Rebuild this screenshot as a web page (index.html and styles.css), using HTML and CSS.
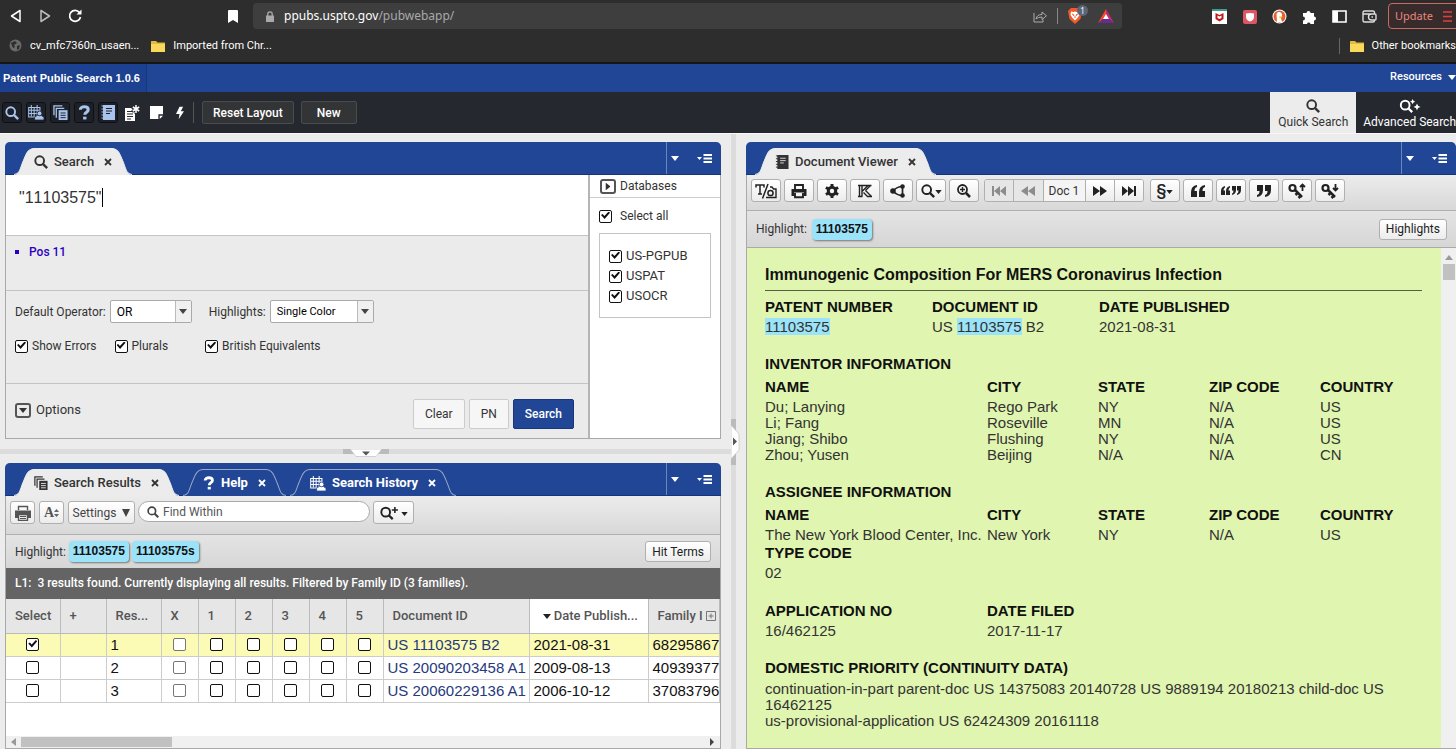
FILE: index.html
```html
<!DOCTYPE html>
<html lang="en">
<head>
    <meta charset="UTF-8">
    <meta name="viewport" content="width=device-width, initial-scale=1.0">
    <title>Patent Public Search</title>
    <link rel="stylesheet" href="styles.css">
</head>
<body>
    <!-- shared icons -->
    <svg class="sprite" aria-hidden="true">
        <symbol id="i-search" viewBox="0 0 16 16"><circle cx="6.5" cy="6.5" r="5" fill="none" stroke="currentColor" stroke-width="2.2"/><path d="M10 10l5 5" stroke="currentColor" stroke-width="2.8"/></symbol>
        <symbol id="i-searchplus" viewBox="0 0 24 16"><circle cx="6.5" cy="7" r="5" fill="none" stroke="currentColor" stroke-width="2.2"/><path d="M10 10.5l4.500 4.500" stroke="currentColor" stroke-width="2.600"/><path d="M17 1v7M13.500 4.500h7" stroke="currentColor" stroke-width="1.800"/></symbol>
        <symbol id="i-searchstars" viewBox="0 0 24 16"><circle cx="6.5" cy="7" r="5" fill="none" stroke="currentColor" stroke-width="2.200"/><path d="M10 10.500l4.500 4.500" stroke="currentColor" stroke-width="2.600"/><path d="M15 0l1 2 2 1-2 1-1 2-1-2-2-1 2-1zM20 5l1.200 2.800L24 9l-2.800 1.200L20 13l-1.200-2.800L16 9l2.800-1.200z" fill="currentColor"/></symbol>
        <symbol id="i-pages" viewBox="0 0 16 16"><path d="M1 11V1h9M3.500 13.500V3.500H12" fill="none" stroke="currentColor" stroke-width="1.400"/><path d="M6 5.500h9.500V16H6z" fill="currentColor"/><path d="M8 8.500h5.500M8 11h5.500M8 13.500h5.500" stroke="var(--line, #eee)"/></symbol>
        <symbol id="i-calendar" viewBox="0 0 17 16"><path d="M.7 2.700h12v10H.7zM.7 5.500h12M3.500 0v12M6.500 3v9M9.700 0v12M.7 9h12" fill="none" stroke="currentColor" stroke-width="1.100"/><path d="M7 16v-3l3-2h4l3 2v3z" fill="currentColor" stroke="var(--line, #204695)" stroke-width=".8"/><circle cx="12.300" cy="9" r="2.500" fill="currentColor" stroke="var(--line, #204695)" stroke-width=".8"/></symbol>
        <symbol id="i-help" viewBox="0 0 14 16"><path d="M2.500 5C2.500 0.800 11 0.800 11 5c0 2.600-3.700 2.700-3.700 5.500" fill="none" stroke="currentColor" stroke-width="3.300"/><path d="M5.500 12.500h3.600v3H5.500z" fill="currentColor"/></symbol>
        <symbol id="i-book" viewBox="0 0 14 15"><path d="M2 0h12v15H2z" fill="currentColor"/><path d="M5 3.500h6M5 6h6M5 8.500h4" stroke="var(--line, #ddd)"/><path d="M.5 1h3M.5 4h3M.5 7h3M.5 10h3M.5 13h3" stroke="currentColor"/></symbol>
        <symbol id="i-note" viewBox="0 0 16 16"><path d="M1 3h10v13H1z" fill="currentColor"/><path d="M3 6.500h5M3 9h6M3 11.500h6M3 14h4" stroke="#262830"/><path d="M12 0v9M8 2.500l8 4M16 2.500l-8 4" stroke="#262830" stroke-width="3"/><path d="M12 0v8M8.800 2l6.400 4M15.200 2L8.800 6" stroke="currentColor" stroke-width="1.500"/></symbol>
        <symbol id="i-sticky" viewBox="0 0 14 14"><path d="M0 0h14v9H9v5H0z" fill="currentColor"/><path d="M10.500 10.500H14L10.500 14z" fill="currentColor"/></symbol>
        <symbol id="i-bolt" viewBox="0 0 9 14"><path d="M4 0h4L5.500 5H9L3 14l1-6H0z" fill="currentColor"/></symbol>
        <symbol id="i-x" viewBox="0 0 8 8"><path d="M1 1l6 6M7 1L1 7" stroke="currentColor" stroke-width="1.800"/></symbol>
        <symbol id="i-down" viewBox="0 0 8 5"><path d="M0 0h8L4 5z" fill="currentColor"/></symbol>
        <symbol id="i-menu" viewBox="0 0 15 9"><path d="M0 3h5L2.500 6z" fill="currentColor"/><path d="M6.500 1H15M6.500 4.500H15M6.500 8H15" stroke="currentColor" stroke-width="1.800"/></symbol>
        <symbol id="i-folder" viewBox="0 0 14 12"><path d="M0 1.500Q0 1 .5 1H5l1.500 1.500h7q.5 0 .5.500v8.500q0 .5-.5.500H.5Q0 12 0 11.500z" fill="#e3b93f"/><path d="M0 4h14v7.500q0 .5-.5.500H.5Q0 12 0 11.500z" fill="#f8d95c"/></symbol>
        <symbol id="i-printer" viewBox="0 0 16 16"><path d="M4 6V2h8v4M4 10v4.200h8V10" fill="none" stroke="currentColor" stroke-width="1.900"/><path d="M.5 6h15v7H13V9.500H3V13H.5z" fill="currentColor"/></symbol>
        <symbol id="i-printer-page" viewBox="0 0 16 16"><path d="M3.500 5V1.500h9V5" fill="none" stroke="currentColor" stroke-width="1.400"/><path d="M0 5.500h16V13H0z" fill="currentColor"/><path d="M3.500 9.500h9v6h-9z" fill="#eee" stroke="currentColor" stroke-width="1.400"/><path d="M5 11.500h6M5 13.500h6" stroke="currentColor"/></symbol>
        <symbol id="tab-edge" viewBox="0 0 20 26" preserveAspectRatio="none"><path d="M0 26C6 25 6 20 9 13S14 .5 20 .5V26z" fill="var(--tab-fill)"/><path d="M0 25.500C6 25 6 20 9 13S14 .5 20 .5" fill="none" stroke="var(--tab-line)"/></symbol>
        <symbol id="i-key" viewBox="0 0 18 16"><circle cx="4.500" cy="5" r="3" fill="none" stroke="currentColor" stroke-width="2.200"/><path d="M7 7l7 7M10 9.500l-2.500 2.500M13 12.500l-2.500 2.500" stroke="currentColor" stroke-width="2.500"/></symbol>
    </svg>

    <div class="browser">
        <div class="browser-bar">
            <div class="nav-buttons">
                <button class="plain" aria-label="Back"><svg width="12" height="14" viewBox="0 0 12 14"><path d="M10 1.500v11L1.500 7z" fill="none" stroke="#fff" stroke-width="1.500" stroke-linejoin="round"/></svg></button>
                <button class="plain" aria-label="Forward"><svg width="12" height="14" viewBox="0 0 12 14"><path d="M2 1.500v11L10.500 7z" fill="none" stroke="#bbb" stroke-width="1.500" stroke-linejoin="round"/></svg></button>
                <button class="plain" aria-label="Reload"><svg width="14" height="14" viewBox="0 0 14 14"><path d="M11.500 3.500A5.500 5.500 0 1 0 12.500 8" fill="none" stroke="#fff" stroke-width="1.700"/><path d="M8.500 5.500h5v-5z" fill="#fff"/></svg></button>
            </div>
            <button class="plain bookmark" aria-label="Bookmark"><svg width="10" height="13" viewBox="0 0 10 13"><path d="M1 0h8q1 0 1 1v12L5 10l-5 3V1q0-1 1-1z" fill="#fff"/></svg></button>
            <div class="address">
                <svg width="8" height="11" viewBox="0 0 8 11"><path d="M0 4.500h8V11H0z" fill="#a9a9ac"/><path d="M1.800 5V3a2.200 2.200 0 0 1 4.400 0v2" fill="none" stroke="#a9a9ac" stroke-width="1.300"/></svg>
                <span class="url">ppubs.uspto.gov<span>/pubwebapp/</span></span>
                <svg class="share" width="14" height="13" viewBox="0 0 14 13"><path d="M1 3v9h9V9.500" fill="none" stroke="#aaa"/><path d="M3 9c.5-3 2.500-4.500 6-4.500V2l4.500 3.800L9 9.500V7Q5 7 3 9z" fill="none" stroke="#aaa"/></svg>
                <span class="bar-line"></span>
                <span class="shield">
                    <svg width="14" height="16" viewBox="0 0 14 16"><path d="M3 0h8l3 3-1.500 8L7 16l-5.500-5L0 3z" fill="#f05a2b"/><path d="M3 3.500l2.500.5L7 3.500 8.500 4l2.500-.5L11.500 7l-2 3L7 12.500 4.500 10l-2-3z" fill="#fff"/><path d="M4 6l2 1-.5 1M10 6L8 7l.5 1M7 8v2" stroke="#f05a2b" fill="none"/></svg>
                    <span class="shield-count">1</span>
                </span>
                <svg class="bat" width="16" height="14" viewBox="0 0 16 14"><path d="M8 0v5.500L5.500 9.500 0 14z" fill="#ff4724"/><path d="M0 14l5-4h6l5 4z" fill="#6a2b8f"/><path d="M8 0l8 14-5-4L8 5z" fill="#c72777"/><path d="M8 5l3 5H5z" fill="#fff"/></svg>
            </div>
            <div class="extensions">
                <svg width="15" height="15" viewBox="0 0 15 15"><path d="M0 0h15v15H0z" fill="#fff"/><path d="M0 0h15v2H0z" fill="#3aa08d"/><path d="M3.500 4L7.500 6l4-2v6l-4 2.500-4-2.500z" fill="#c01818"/><path d="M5.500 6.500l2 1 2-1V9l-2 1-2-1z" fill="#fff"/></svg>
                <svg width="15" height="15" viewBox="0 0 15 15"><rect x="1" y="1" width="14" height="14" rx="2" fill="#de5664"/><path d="M4 4.500l4-.5 4 .5V8q0 3-4 4.500Q4 11 4 8z" fill="#fff"/></svg>
                <svg width="15" height="15" viewBox="0 0 15 15"><circle cx="7.500" cy="7.500" r="7" fill="#fff"/><circle cx="7.500" cy="7.500" r="6" fill="#e0632f"/><path d="M5 13L4.500 5Q5 2.500 7.500 3q3 .5 2.500 4L9 9l1 4z" fill="#fff"/><path d="M7 7.500h4l-3 2z" fill="#f8c330"/></svg>
                <svg width="15" height="15" viewBox="0 0 15 15"><path d="M1 4h3.500a2 2 0 1 1 4 0H12v3.500a2 2 0 1 1 0 4V15H8.500a1.800 1.800 0 0 0-3.500 0H1v-3.500a2 2 0 0 0 0-4z" fill="#fff"/></svg>
                <svg width="15" height="13" viewBox="0 0 15 13"><path d="M1 1h13v11H1z" fill="none" stroke="#fff" stroke-width="1.600"/><path d="M1 1h5v11H1z" fill="#fff"/></svg>
                <svg width="15" height="13" viewBox="0 0 15 13"><path d="M12.500 4V2.500q0-1.500-1.500-1.500H2.500Q1 1 1 2.500v8Q1 12 2.500 12H11q1.500 0 1.500-1.500V10M1.500 4H13q1 0 1 1v4q0 1-1 1H9.500a3 3 0 0 1 0-6M9.500 7H11" fill="none" stroke="#ddd" stroke-width="1.400"/></svg>
            </div>
            <button class="update">Update <svg width="10" height="11" viewBox="0 0 10 11"><path d="M0 1h9M0 5.500h9M0 10h9" stroke="#e0403c" stroke-width="1.300"/></svg></button>
        </div>
        <div class="bookmarks">
            <a href="#"><svg width="13" height="13" viewBox="0 0 13 13"><circle cx="6.500" cy="6.500" r="6" fill="#6a6a6a"/><path d="M2 4l4-2 2 2-3 2 1 2-2 1zM8 7l3-1-1 4-2 1z" fill="#2d2d2d"/></svg>cv_mfc7360n_usaen...</a>
            <a href="#"><svg width="14" height="12"><use href="#i-folder"/></svg>Imported from Chr...</a>
            <a href="#" class="other"><svg width="14" height="12"><use href="#i-folder"/></svg>Other bookmarks</a>
        </div>
    </div>

    <header class="app-header">
        <h1>Patent Public Search 1.0.6</h1>
        <button class="plain resources">Resources <svg width="8" height="5"><use href="#i-down"/></svg></button>
    </header>

    <nav class="app-toolbar">
        <div class="tool-icons">
            <button class="tool on" aria-label="Search"><svg width="14" height="14"><use href="#i-search"/></svg></button>
            <button class="tool on" aria-label="Search History"><svg width="16" height="15"><use href="#i-calendar"/></svg></button>
            <button class="tool on" aria-label="Search Results"><svg width="15" height="15"><use href="#i-pages"/></svg></button>
            <button class="tool on" aria-label="Help"><svg width="13" height="15"><use href="#i-help"/></svg></button>
            <button class="tool on" aria-label="Document Viewer"><svg width="14" height="15"><use href="#i-book"/></svg></button>
            <button class="tool" aria-label="Notes"><svg width="16" height="16"><use href="#i-note"/></svg></button>
            <button class="tool" aria-label="Sticky note"><svg width="13" height="13"><use href="#i-sticky"/></svg></button>
            <button class="tool" aria-label="Quick action"><svg width="8" height="14"><use href="#i-bolt"/></svg></button>
        </div>
        <button class="dark-button">Reset Layout</button>
        <button class="dark-button">New</button>
        <div class="modes">
            <a href="#" class="mode active"><svg width="14" height="14"><use href="#i-search"/></svg>Quick Search</a>
            <a href="#" class="mode"><svg width="24" height="14"><use href="#i-searchstars"/></svg>Advanced Search</a>
        </div>
    </nav>

    <main class="workspace">
        <div class="left-column">
            <section class="pane">
                <div class="pane-header">
                    <div class="tab active">
                        <svg class="edge"><use href="#tab-edge"/></svg>
                        <div class="tab-body"><svg width="14" height="14"><use href="#i-search"/></svg><span>Search</span><button class="plain" aria-label="Close Search"><svg width="8" height="8"><use href="#i-x"/></svg></button></div>
                        <svg class="edge right"><use href="#tab-edge"/></svg>
                    </div>
                    <div class="pane-menu"><button class="plain" aria-label="Tabs"><svg width="8" height="5"><use href="#i-down"/></svg></button><button class="plain" aria-label="Pane menu"><svg width="15" height="9"><use href="#i-menu"/></svg></button></div>
                </div>
                <div class="search-body">
                    <form class="search-form" onsubmit="return false">
                        <div class="query">
                            <textarea aria-label="Query" spellcheck="false">"11103575"</textarea>
                            <span class="caret"></span>
                        </div>
                        <ul class="messages"><li>Pos 11</li></ul>
                        <div class="settings">
                            <div class="setting-row">
                                <label for="operator">Default Operator:</label>
                                <span class="select operator"><select id="operator"><option>OR</option><option>AND</option></select><i><svg width="8" height="5"><use href="#i-down"/></svg></i></span>
                                <label for="colors">Highlights:</label>
                                <span class="select colors"><select id="colors"><option>Single Color</option><option>Multi-color</option></select><i><svg width="8" height="5"><use href="#i-down"/></svg></i></span>
                            </div>
                            <div class="setting-row checks">
                                <label><input type="checkbox" checked>Show Errors</label>
                                <label><input type="checkbox" checked>Plurals</label>
                                <label><input type="checkbox" checked>British Equivalents</label>
                            </div>
                        </div>
                        <div class="actions">
                            <button class="plain options"><span class="box-arrow"><svg width="8" height="5"><use href="#i-down"/></svg></span>Options</button>
                            <div class="action-buttons">
                                <button class="flat">Clear</button>
                                <button class="flat">PN</button>
                                <button class="flat primary">Search</button>
                            </div>
                        </div>
                    </form>
                    <aside class="databases">
                        <button class="plain db-title"><span class="box-arrow side"><svg width="8" height="5"><use href="#i-down"/></svg></span>Databases</button>
                        <label class="select-all"><input type="checkbox" checked>Select all</label>
                        <div class="db-list">
                            <label><input type="checkbox" checked>US-PGPUB</label>
                            <label><input type="checkbox" checked>USPAT</label>
                            <label><input type="checkbox" checked>USOCR</label>
                        </div>
                    </aside>
                </div>
            </section>

            <div class="h-splitter">
                <svg width="46" height="8" viewBox="0 0 46 8"><path d="M0 0h46v5H0z" fill="#bbb"/><path d="M7 0h32l-6 7.500H13z" fill="#fff" stroke="#bbb" stroke-width=".6"/><path d="M19 2.500h8l-4 4z" fill="#555"/></svg>
            </div>

            <section class="pane results">
                <div class="pane-header">
                    <div class="tab active">
                        <svg class="edge"><use href="#tab-edge"/></svg>
                        <div class="tab-body"><svg width="14" height="14"><use href="#i-pages"/></svg><span>Search Results</span><button class="plain" aria-label="Close Search Results"><svg width="8" height="8"><use href="#i-x"/></svg></button></div>
                        <svg class="edge right"><use href="#tab-edge"/></svg>
                    </div>
                    <div class="tab">
                        <svg class="edge"><use href="#tab-edge"/></svg>
                        <div class="tab-body"><svg width="12" height="14"><use href="#i-help"/></svg><span>Help</span><button class="plain" aria-label="Close Help"><svg width="8" height="8"><use href="#i-x"/></svg></button></div>
                        <svg class="edge right"><use href="#tab-edge"/></svg>
                    </div>
                    <div class="tab">
                        <svg class="edge"><use href="#tab-edge"/></svg>
                        <div class="tab-body"><svg width="16" height="15"><use href="#i-calendar"/></svg><span>Search History</span><button class="plain" aria-label="Close Search History"><svg width="8" height="8"><use href="#i-x"/></svg></button></div>
                        <svg class="edge right"><use href="#tab-edge"/></svg>
                    </div>
                    <div class="pane-menu"><button class="plain" aria-label="Tabs"><svg width="8" height="5"><use href="#i-down"/></svg></button><button class="plain" aria-label="Pane menu"><svg width="15" height="9"><use href="#i-menu"/></svg></button></div>
                </div>
                <div class="result-tools">
                    <button class="tbtn small" aria-label="Print"><svg width="16" height="16"><use href="#i-printer-page"/></svg></button>
                    <button class="tbtn small serif" aria-label="Font size">A<svg width="5" height="8" viewBox="0 0 5 8"><path d="M2.500 0L5 3H0zM0 5h5L2.500 8z" fill="#666"/></svg></button>
                    <button class="tbtn settings-btn">Settings <svg width="8" height="8" viewBox="0 0 8 8"><path d="M0 0h8L4 8z" fill="currentColor"/></svg></button>
                    <div class="find"><svg width="12" height="12"><use href="#i-search"/></svg><input type="text" placeholder="Find Within" aria-label="Find Within"></div>
                    <button class="tbtn wide" aria-label="Search actions"><svg width="21" height="14"><use href="#i-searchplus"/></svg><svg class="tiny" width="7" height="4"><use href="#i-down"/></svg></button>
                </div>
                <div class="highlight-bar">
                    <span>Highlight:</span>
                    <mark class="chip">11103575</mark>
                    <mark class="chip">11103575s</mark>
                    <button class="tbtn push">Hit Terms</button>
                </div>
                <div class="status">L1:&nbsp; 3 results found. Currently displaying all results. Filtered by Family ID (3 families).</div>
                <div class="grid-wrap">
                    <table class="grid">
                        <colgroup><col class="c-select"><col class="c-plus"><col class="c-res"><col class="c-tag"><col class="c-tag"><col class="c-tag"><col class="c-tag"><col class="c-tag"><col class="c-tag"><col class="c-doc"><col class="c-date"><col class="c-family"></colgroup>
                        <thead>
                            <tr><th>Select</th><th>+</th><th>Res...</th><th>X</th><th>1</th><th>2</th><th>3</th><th>4</th><th>5</th><th>Document ID</th><th class="sorted"><svg width="8" height="5"><use href="#i-down"/></svg> Date Publish...</th><th class="family">Family I<svg width="10" height="10" viewBox="0 0 10 10"><path d="M.5.5h9v9h-9zM5 2.500v5M2.500 5h5" fill="none" stroke="#777"/></svg></th></tr>
                        </thead>
                        <tbody>
                            <tr class="selected"><td><input type="checkbox" aria-label="Select 1" checked></td><td></td><td>1</td><td><input type="checkbox" aria-label="Tag X" disabled></td><td><input type="checkbox" aria-label="Tag 1"></td><td><input type="checkbox" aria-label="Tag 2"></td><td><input type="checkbox" aria-label="Tag 3"></td><td><input type="checkbox" aria-label="Tag 4"></td><td><input type="checkbox" aria-label="Tag 5"></td><td><a href="#">US 11103575 B2</a></td><td>2021-08-31</td><td>68295867</td></tr>
                            <tr><td><input type="checkbox" aria-label="Select 2"></td><td></td><td>2</td><td><input type="checkbox" aria-label="Tag X" disabled></td><td><input type="checkbox" aria-label="Tag 1"></td><td><input type="checkbox" aria-label="Tag 2"></td><td><input type="checkbox" aria-label="Tag 3"></td><td><input type="checkbox" aria-label="Tag 4"></td><td><input type="checkbox" aria-label="Tag 5"></td><td><a href="#">US 20090203458 A1</a></td><td>2009-08-13</td><td>40939377</td></tr>
                            <tr><td><input type="checkbox" aria-label="Select 3"></td><td></td><td>3</td><td><input type="checkbox" aria-label="Tag X" disabled></td><td><input type="checkbox" aria-label="Tag 1"></td><td><input type="checkbox" aria-label="Tag 2"></td><td><input type="checkbox" aria-label="Tag 3"></td><td><input type="checkbox" aria-label="Tag 4"></td><td><input type="checkbox" aria-label="Tag 5"></td><td><a href="#">US 20060229136 A1</a></td><td>2006-10-12</td><td>37083796</td></tr>
                        </tbody>
                    </table>
                </div>
                <div class="h-scroll"><svg width="5" height="8" viewBox="0 0 5 8"><path d="M5 0v8L0 4z" fill="#999"/></svg><span class="thumb"></span><svg width="5" height="8" viewBox="0 0 5 8"><path d="M0 0v8l4-4z" fill="#444"/></svg></div>
            </section>
        </div>

        <div class="v-splitter">
            <svg width="9" height="46" viewBox="0 0 9 46"><path d="M0 0h5v46H0z" fill="#bbb"/><path d="M0 6l8 9v16l-8 9z" fill="#fff" stroke="#bbb" stroke-width=".6"/><path d="M2 18.500v8l4-4z" fill="#555"/></svg>
        </div>

        <section class="pane viewer">
            <div class="pane-header">
                <div class="tab active">
                    <svg class="edge"><use href="#tab-edge"/></svg>
                    <div class="tab-body"><svg width="14" height="14"><use href="#i-book"/></svg><span>Document Viewer</span><button class="plain" aria-label="Close Document Viewer"><svg width="8" height="8"><use href="#i-x"/></svg></button></div>
                    <svg class="edge right"><use href="#tab-edge"/></svg>
                </div>
                <div class="pane-menu"><button class="plain" aria-label="Tabs"><svg width="8" height="5"><use href="#i-down"/></svg></button><button class="plain" aria-label="Pane menu"><svg width="15" height="9"><use href="#i-menu"/></svg></button></div>
            </div>
            <div class="viewer-tools">
                <button class="tbtn" aria-label="Text or image"><svg width="22" height="16" viewBox="0 0 22 16"><path d="M1 4.500V2h8v2.500M5 2v9M3 11h4M13 1L7.500 15.500" fill="none" stroke="currentColor" stroke-width="1.500"/><path d="M11 14.500h10V6h-2.500L17 4h-2" fill="none" stroke="currentColor" stroke-width="1.400"/><circle cx="15.500" cy="10" r="2.600" fill="none" stroke="currentColor" stroke-width="1.500"/></svg></button>
                <button class="tbtn" aria-label="Print"><svg width="16" height="16"><use href="#i-printer"/></svg></button>
                <button class="tbtn" aria-label="Settings"><svg width="16" height="16" viewBox="0 0 16 16"><circle cx="8" cy="8" r="3.700" fill="none" stroke="currentColor" stroke-width="3"/><path d="M8 1v3M8 12v3M1.900 4.500l2.600 1.500M11.500 10l2.600 1.500M1.900 11.500L4.500 10M11.500 6l2.600-1.500" stroke="currentColor" stroke-width="3"/></svg></button>
                <button class="tbtn" aria-label="KWIC"><svg width="16" height="14" viewBox="0 0 16 14"><path d="M1 1.500h13.500M1 12.500h4.500M10 12.500h5M2.500 1.500v11M5 1.500v11M5.500 7L11 1.500M6.500 8.500l4 4M8.500 6.500l6 6M8.500 6.500L13.500 1.500" fill="none" stroke="currentColor" stroke-width="1.400"/></svg></button>
                <button class="tbtn" aria-label="Share"><svg width="16" height="14" viewBox="0 0 16 14"><path d="M12.500 2.500Q7 2.500 3 7q4 4.500 9.500 4.500v-9" fill="none" stroke="currentColor" stroke-width="1.700"/><circle cx="12.500" cy="2.500" r="2.300" fill="currentColor"/><circle cx="3" cy="7" r="2.800" fill="currentColor"/><circle cx="12.500" cy="11.500" r="2.300" fill="currentColor"/></svg></button>
                <button class="tbtn" aria-label="Find"><svg width="14" height="14"><use href="#i-search"/></svg><svg class="tiny" width="7" height="4"><use href="#i-down"/></svg></button>
                <button class="tbtn" aria-label="Zoom"><svg width="14" height="14" viewBox="0 0 14 14"><circle cx="5.500" cy="5.500" r="4.500" fill="none" stroke="currentColor" stroke-width="1.800"/><path d="M9 9l4 4" stroke="currentColor" stroke-width="2.500"/><path d="M5.500 3v5M3 5.500h5" stroke="currentColor" stroke-width="1.400"/></svg></button>
                <div class="doc-nav">
                    <button class="tbtn" aria-label="First document" disabled><svg width="14" height="10" viewBox="0 0 14 10"><path d="M0 0h2v10H0zM8 0v10L2 5zM14 0v10L8 5z" fill="currentColor"/></svg></button>
                    <button class="tbtn" aria-label="Previous document" disabled><svg width="14" height="10" viewBox="0 0 14 10"><path d="M7 0v10L0 5zM14 0v10L7 5z" fill="currentColor"/></svg></button>
                    <input type="text" value="Doc 1" aria-label="Document">
                    <button class="tbtn" aria-label="Next document"><svg width="14" height="10" viewBox="0 0 14 10"><path d="M0 0v10l7-5zM7 0v10l7-5z" fill="currentColor"/></svg></button>
                    <button class="tbtn" aria-label="Last document"><svg width="14" height="10" viewBox="0 0 14 10"><path d="M0 0v10l6-5zM6 0v10l6-5zM12 0h2v10h-2z" fill="currentColor"/></svg></button>
                </div>
                <button class="tbtn section">§<svg class="tiny" width="7" height="4"><use href="#i-down"/></svg></button>
                <button class="tbtn" aria-label="Previous hit"><svg width="14" height="12" viewBox="0 0 14 12"><path d="M6 0v2Q3.500 2.500 3.500 6H6v6H0V7Q0 1 6 0zM14 0v2q-2.500.5-2.500 4H14v6H8V7q0-6 6-7z" fill="currentColor"/></svg></button>
                <button class="tbtn" aria-label="All hits"><svg width="20" height="9" viewBox="0 0 20 9"><path d="M4 0v1.500Q2.500 2 2.500 4.500H4V9H0V5Q0 1 4 0zM9 0v1.500Q7.500 2 7.500 4.500H9V9H5V5Q5 1 9 0zM11 9V7.500q1.500-.5 1.500-3H11V0h4v4q0 4-4 5zM16 9V7.500q1.500-.5 1.500-3H16V0h4v4q0 4-4 5z" fill="currentColor"/></svg></button>
                <button class="tbtn" aria-label="Next hit"><svg width="14" height="12" viewBox="0 0 14 12"><path d="M0 12v-2q2.500-.5 2.500-4H0V0h6v5q0 6-6 7zM8 12v-2q2.500-.5 2.500-4H8V0h6v5q0 6-6 7z" fill="currentColor"/></svg></button>
                <button class="tbtn" aria-label="Previous term"><svg width="18" height="16" viewBox="0 0 18 16"><use href="#i-key"/><path d="M14.500 8V2M12 4l2.500-2.500L17 4" fill="none" stroke="currentColor" stroke-width="1.800"/></svg></button>
                <button class="tbtn" aria-label="Next term"><svg width="18" height="16" viewBox="0 0 18 16"><use href="#i-key"/><path d="M14.500 1v6M12 5l2.500 2.500L17 5" fill="none" stroke="currentColor" stroke-width="1.800"/></svg></button>
            </div>
            <div class="highlight-bar">
                <span>Highlight:</span>
                <mark class="chip">11103575</mark>
                <button class="tbtn push">Highlights</button>
            </div>
            <div class="viewer-body">
                <article class="patent">
                    <h2>Immunogenic Composition For MERS Coronavirus Infection</h2>
                    <table class="thirds">
                        <thead><tr><th>PATENT NUMBER</th><th>DOCUMENT ID</th><th>DATE PUBLISHED</th></tr></thead>
                        <tbody><tr><td><mark>11103575</mark></td><td>US <mark>11103575</mark> B2</td><td>2021-08-31</td></tr></tbody>
                    </table>
                    <h3>INVENTOR INFORMATION</h3>
                    <table>
                        <thead><tr><th>NAME</th><th>CITY</th><th>STATE</th><th>ZIP CODE</th><th>COUNTRY</th></tr></thead>
                        <tbody>
                            <tr><td>Du; Lanying</td><td>Rego Park</td><td>NY</td><td>N/A</td><td>US</td></tr>
                            <tr><td>Li; Fang</td><td>Roseville</td><td>MN</td><td>N/A</td><td>US</td></tr>
                            <tr><td>Jiang; Shibo</td><td>Flushing</td><td>NY</td><td>N/A</td><td>US</td></tr>
                            <tr><td>Zhou; Yusen</td><td>Beijing</td><td>N/A</td><td>N/A</td><td>CN</td></tr>
                        </tbody>
                    </table>
                    <h3>ASSIGNEE INFORMATION</h3>
                    <table>
                        <thead><tr><th>NAME</th><th>CITY</th><th>STATE</th><th>ZIP CODE</th><th>COUNTRY</th></tr></thead>
                        <tbody><tr><td>The New York Blood Center, Inc.</td><td>New York</td><td>NY</td><td>N/A</td><td>US</td></tr></tbody>
                    </table>
                    <table>
                        <thead><tr><th>TYPE CODE</th></tr></thead>
                        <tbody><tr><td>02</td></tr></tbody>
                    </table>
                    <table class="spaced">
                        <thead><tr><th>APPLICATION NO</th><th>DATE FILED</th></tr></thead>
                        <tbody><tr><td>16/462125</td><td>2017-11-17</td></tr></tbody>
                    </table>
                    <h3>DOMESTIC PRIORITY (CONTINUITY DATA)</h3>
                    <p>continuation-in-part parent-doc US 14375083 20140728 US 9889194 20180213 child-doc US 16462125</p>
                    <p>us-provisional-application US 62424309 20161118</p>
                </article>
                <div class="v-scroll"><svg width="8" height="5" viewBox="0 0 8 5"><path d="M0 5h8L4 0z" fill="#999"/></svg><span class="thumb"></span></div>
            </div>
        </section>
    </main>
</body>
</html>
```
FILE: styles.css
```css
* {
    box-sizing: border-box;
}

body {
    margin: 0;
    height: 100vh;
    overflow: hidden;
    display: flex;
    flex-direction: column;
    background: #ececec;
    color: #333;
    font-family: Roboto, "Liberation Sans", sans-serif;
    font-size: 12px;
    line-height: 16px;
}

button, input, select, textarea {
    font: inherit;
    color: inherit;
    margin: 0;
}

svg {
    display: block;
    flex: none;
}

a {
    color: inherit;
    text-decoration: none;
}

.sprite {
    position: absolute;
    width: 0;
    height: 0;
}

.plain {
    display: flex;
    align-items: center;
    padding: 0;
    border: 0;
    background: none;
}

/* Browser chrome */
.browser {
    background: #2d2d2d;
    border-bottom: 2px solid #161616;
    color: #fff;
    flex: none;
}

.browser-bar {
    display: flex;
    align-items: center;
    height: 32px;
    padding-left: 10px;
    overflow: hidden;
    font-family: "Noto Sans", sans-serif;
}

.nav-buttons {
    display: flex;
    gap: 17px;
}

.bookmark {
    margin: 0 15px 0 146px;
}

.address {
    flex: 1;
    display: flex;
    align-items: center;
    height: 26px;
    padding: 0 8px 0 13px;
    border-radius: 4px;
    background: #3e3e3e;
}

.url {
    margin-left: 10px;
}

.url span {
    color: #a9a9ac;
}

.share {
    margin-left: auto;
}

.bar-line {
    width: 1px;
    height: 16px;
    margin: 0 10px;
    background: #888;
}

.shield {
    position: relative;
    margin-right: 16px;
}

.shield-count {
    position: absolute;
    left: 9px;
    top: -3px;
    width: 11px;
    height: 11px;
    border-radius: 6px;
    background: #5b6577;
    font-size: 8px;
    line-height: 11px;
    text-align: center;
}

.extensions {
    display: flex;
    align-items: center;
    gap: 15px;
    margin: 0 11px 0 90px;
}

.update {
    display: flex;
    align-items: center;
    gap: 10px;
    flex: none;
    width: 72px;
    height: 26px;
    margin-right: -4px;
    padding: 0 6px;
    border: 1px solid #c96a62;
    border-radius: 4px;
    background: #382b2b;
    color: #e88780;
    font-size: 11px;
}

.bookmarks {
    display: flex;
    align-items: center;
    height: 30px;
    padding: 0 0 3px 9px;
    gap: 12px;
    font-size: 11px;
    white-space: nowrap;
    overflow: hidden;
}

.bookmarks a {
    display: flex;
    align-items: center;
    gap: 8px;
}

.bookmarks .other {
    margin-left: auto;
    padding-left: 10px;
    border-left: 1px solid #666;
}

/* Application header */
.app-header {
    display: flex;
    justify-content: space-between;
    height: 28px;
    flex: none;
    background: #204695;
    color: #fff;
}

.app-header h1 {
    margin: 0;
    padding: 0 6px 0 3px;
    border-right: 1px solid #17377a;
    background: #1c4190;
    font: bold 11px/28px "Liberation Sans", sans-serif;
}

.resources {
    gap: 6px;
    padding-bottom: 2px;
    font-size: 11px;
    font-weight: 500;
}

.app-toolbar {
    display: flex;
    align-items: center;
    height: 41px;
    flex: none;
    padding-left: 2px;
    background: #262830;
    color: #fff;
    overflow: hidden;
}

.tool-icons {
    display: flex;
    gap: 4px;
    padding-right: 3px;
    margin-right: 8px;
    border-right: 1px solid #555;
}

.tool {
    display: flex;
    align-items: center;
    justify-content: center;
    width: 20px;
    height: 21px;
    padding: 0;
    border: 1px solid transparent;
    border-radius: 3px;
    background: none;
    color: #fff;
}

.tool.on {
    border-color: #0e1014;
    background: #1d2027;
    color: #a8c4ec;
    --line: #1d2027;
}

.dark-button {
    height: 23px;
    margin-right: 7px;
    padding: 0 10px;
    border: 1px solid #4a4b4c;
    border-radius: 2px;
    background: #333436;
    font-weight: 500;
}

.dark-button + .dark-button {
    padding: 0 15px;
}

.modes {
    display: flex;
    height: 100%;
    margin-left: auto;
}

.mode {
    display: flex;
    flex-direction: column;
    align-items: center;
    gap: 1px;
    padding: 7px 0 0 7px;
    white-space: nowrap;
}

.mode.active {
    padding: 7px 8px 0;
    background: #ececec;
    color: #333;
}

/* Panes */
.workspace {
    flex: 1;
    min-height: 0;
    display: flex;
    border-top: 1px solid #f8f8f8;
}

.left-column {
    flex: 0 0 50%;
    min-width: 0;
    display: flex;
    flex-direction: column;
    padding: 8px 7px 0 5px;
}

.pane {
    display: flex;
    flex-direction: column;
    border: 1px solid #a9a9a9;
    border-top: 0;
    border-radius: 5px 5px 0 0;
}

.pane-header {
    display: flex;
    align-items: flex-end;
    height: 33px;
    flex: none;
    margin: 0 -1px;
    padding-left: 9px;
    border-bottom: 1px solid #14357c;
    border-radius: 5px 5px 0 0;
    background: #204695;
    color: #fff;
    font-size: 13px;
}

.tab {
    display: flex;
    height: 27px;
    margin-bottom: -1px;
    margin-right: 4px;
    font-weight: bold;
    --tab-fill: #204695;
    --tab-line: #9aa8c6;
}

.tab.active {
    color: #333;
    font-weight: 500;
    --tab-fill: #ececec;
    --tab-line: #ececec;
}

.edge {
    width: 20px;
    height: 27px;
}

.edge.right {
    transform: scaleX(-1);
}

.tab-body {
    display: flex;
    align-items: center;
    gap: 6px;
    border-top: 1px solid var(--tab-line);
    background: var(--tab-fill);
}

.tab-body button {
    margin-left: 4px;
}

.pane-menu {
    display: flex;
    align-items: center;
    gap: 18px;
    height: 100%;
    margin-left: auto;
    padding: 0 9px 0 4px;
    border-left: 1px solid #6c86bb;
}

/* Search pane */
.search-body {
    display: flex;
    background: #ebebeb;
}

.search-form {
    flex: 1;
}

.query {
    position: relative;
    height: 60px;
    background: #fff;
}

.query textarea {
    display: block;
    width: 100%;
    height: 100%;
    padding: 13px;
    border: 0;
    outline: 0;
    resize: none;
    background: none;
    font: 16px/20px "Liberation Sans", sans-serif;
    font-kerning: none;
}

.caret {
    position: absolute;
    left: 96px;
    top: 13px;
    width: 1px;
    height: 19px;
    background: #000;
}

.messages {
    height: 55px;
    margin: 0;
    padding: 8px 9px 0;
    border-top: 1px solid #c4c4c4;
    list-style: none;
    color: #2a00c4;
    font-weight: 500;
}

.messages li {
    display: flex;
    align-items: center;
}

.messages li::before {
    content: "";
    width: 4px;
    height: 4px;
    margin-right: 10px;
    background: currentColor;
}

.settings {
    height: 93px;
    padding: 9px 9px 0;
    border-top: 1px solid #c4c4c4;
}

.setting-row {
    display: flex;
    align-items: center;
}

.select {
    display: flex;
    height: 23px;
    margin: 0 17px 0 4px;
    border: 1px solid #aaa;
    border-radius: 2px;
    background: #fff;
    color: #000;
}

.select select {
    flex: 1;
    min-width: 0;
    padding: 0 6px;
    border: 0;
    background: none;
    appearance: none;
}

.select i {
    display: flex;
    align-items: center;
    justify-content: center;
    width: 16px;
    border-left: 1px solid #bbb;
    background: #f0f0f0;
    color: #444;
}

.operator {
    width: 82px;
}

.colors {
    width: 104px;
    font-size: 11px;
}

.checks {
    margin-top: 15px;
    gap: 18px;
}

.checks label:last-child {
    margin-left: 19px;
}

label {
    display: flex;
    align-items: center;
}

input[type="checkbox"] {
    appearance: none;
    display: block;
    width: 13px;
    height: 13px;
    flex: none;
    border: 1px solid #111;
    border-radius: 2px;
    background: #fff;
}

input[type="checkbox"]:checked::before {
    content: "";
    display: block;
    width: 9px;
    height: 8px;
    margin: 1px;
    background: #111;
    clip-path: polygon(0 45%, 18% 30%, 38% 55%, 85% 0, 100% 15%, 40% 95%);
}

input[type="checkbox"]:disabled {
    border-color: #777;
}

label input[type="checkbox"] {
    margin-right: 4px;
}

.actions {
    display: flex;
    justify-content: space-between;
    align-items: center;
    height: 55px;
    padding: 6px 14px 0 9px;
    border-top: 1px solid #c4c4c4;
}

.options {
    gap: 5px;
    margin-top: -8px;
    font-size: 13px;
}

.box-arrow {
    display: flex;
    align-items: center;
    justify-content: center;
    width: 16px;
    height: 15px;
    border: 2px solid #555;
    border-radius: 3px;
}

.side svg {
    transform: rotate(-90deg);
}

.action-buttons {
    display: flex;
    gap: 4px;
}

.flat {
    height: 30px;
    padding: 0 11px;
    border: 1px solid #ccc;
    border-radius: 2px;
    background: #f6f6f6;
}

.flat.primary {
    border-color: #17377a;
    background: #204695;
    color: #fff;
    font-weight: 500;
}

.databases {
    width: 132px;
    border-left: 2px solid #b5b5b5;
    background: #fff;
}

.db-title {
    width: 100%;
    height: 23px;
    gap: 4px;
    padding-left: 10px;
    border-bottom: 1px solid #ccc;
}

.select-all {
    padding: 10px 0 0 9px;
}

.select-all input[type="checkbox"] {
    margin-right: 8px;
}

.db-list {
    display: flex;
    flex-direction: column;
    gap: 4px;
    height: 85px;
    margin: 9px 9px 0;
    padding: 14px 9px;
    border: 1px solid #c4c4c4;
    font-size: 13px;
}

/* Splitters */
.h-splitter {
    display: flex;
    justify-content: center;
    height: 5px;
    flex: none;
    margin: 10px -10px 9px -5px;
    background: #dcdcdc;
}

.v-splitter {
    display: flex;
    align-items: center;
    width: 5px;
    flex: none;
    margin: 0 10px 0 3px;
    background: #dcdcdc;
}

/* Toolbars */
.tbtn {
    display: flex;
    align-items: center;
    justify-content: center;
    width: 30px;
    height: 23px;
    flex: none;
    padding: 0;
    border: 1px solid #b0b0b0;
    border-radius: 3px;
    background: linear-gradient(#fff, #ececec);
    color: #222;
}

.tbtn:disabled {
    color: #8c8c8c;
    background: #e6e6e6;
}

.tbtn .tiny {
    margin-top: 2px;
}

.tbtn.small {
    width: 25px;
    color: #555;
}

.tbtn.serif {
    font: bold 14px "Liberation Serif", serif;
}

.tbtn.settings-btn {
    width: 67px;
    gap: 6px;
    color: #444;
}

.tbtn.wide {
    width: 41px;
}

.tbtn.push {
    width: auto;
    height: 21px;
    margin-left: auto;
    padding: 0 6px;
}

.results {
    flex: 1;
    min-height: 0;
    background: #fff;
}

.result-tools {
    display: flex;
    gap: 4px;
    height: 38px;
    flex: none;
    padding: 5px 4px;
    background: linear-gradient(#ececec, #d8d8d8);
}

.find {
    display: flex;
    align-items: center;
    gap: 4px;
    width: 232px;
    height: 21px;
    margin: 0 -1px;
    padding: 0 8px;
    border: 1px solid #aaa;
    border-radius: 11px;
    background: #fff;
    color: #444;
}

.find input {
    flex: 1;
    min-width: 0;
    padding: 0;
    border: 0;
    background: none;
}

.find input::placeholder {
    color: #555;
}

.highlight-bar {
    display: flex;
    align-items: center;
    height: 34px;
    flex: none;
    gap: 3px;
    padding: 0 9px;
    border-top: 1px solid #b0b0b0;
    background: linear-gradient(#e4e4e4, #d6d6d6);
}

.chip {
    height: 21px;
    padding: 0 4px;
    border-radius: 4px;
    background: #9be3f9;
    box-shadow: 1px 1px 2px #777;
    color: #111;
    font: bold 12px/21px "Liberation Sans", sans-serif;
}

.status {
    height: 31px;
    flex: none;
    padding-left: 9px;
    background: #646464;
    color: #fff;
    font-weight: 500;
    line-height: 31px;
    white-space: nowrap;
}

.grid-wrap {
    flex: 1;
    min-height: 0;
    overflow: hidden;
}

.grid {
    width: 714px;
    table-layout: fixed;
    border-collapse: collapse;
    white-space: nowrap;
}

.c-select { width: 54px; }
.c-plus { width: 46px; }
.c-res { width: 55px; }
.c-tag { width: 37px; }
.c-doc { width: 146px; }
.c-date { width: 119px; }

.grid th {
    height: 34px;
    padding: 0 9px;
    border-right: 1px solid #bbb;
    border-bottom: 1px solid #bbb;
    background: #e6e6e6;
    color: #555;
    font-size: 13px;
    font-weight: 500;
    text-align: left;
}

.grid .sorted {
    padding: 0 0 0 13px;
    background: #fff;
}

.grid th svg {
    display: inline-block;
    vertical-align: middle;
    color: #222;
}

.grid .family {
    padding-right: 0;
}

.grid .family svg {
    margin-left: 3px;
}

.grid td {
    height: 23px;
    padding: 0 4px;
    border-right: 1px solid #ccc;
    border-bottom: 1px solid #ccc;
    color: #111;
    font: 15px/20px "Liberation Sans", sans-serif;
}

.grid td input {
    margin: 0 auto;
}

.grid .selected td {
    background: #fbfbb5;
}

.grid td a {
    color: #26397c;
}

.h-scroll {
    display: flex;
    align-items: center;
    height: 12px;
    flex: none;
    padding: 0 5px;
    background: #f0f0f0;
}

.h-scroll .thumb {
    width: 151px;
    height: 10px;
    margin: 0 auto 0 5px;
    background: #c1c1c1;
}

/* Document viewer */
.viewer {
    flex: 1;
    min-width: 0;
    margin-top: 8px;
    border-right: 0;
}

.viewer .pane-header {
    margin-right: 0;
}

.viewer-tools {
    display: flex;
    gap: 3px;
    height: 35px;
    flex: none;
    padding: 4px;
    background: linear-gradient(#ececec, #d8d8d8);
}

.doc-nav {
    display: flex;
    width: 160px;
    height: 23px;
    margin: 0 3px 0 2px;
    border: 1px solid #b0b0b0;
    border-radius: 3px;
    overflow: hidden;
}

.doc-nav .tbtn {
    flex: 1;
    height: 21px;
    border: 0;
    border-left: 1px solid #b0b0b0;
    border-radius: 0;
}

.doc-nav .tbtn:first-child {
    border-left: 0;
}

.doc-nav input {
    width: 42px;
    padding: 0 5px;
    border: 0;
    border-left: 1px solid #b0b0b0;
    background: #f4f4f4;
}

.section {
    font-size: 16px;
    font-weight: 500;
}

.viewer .highlight-bar {
    height: 38px;
    gap: 5px;
    border-bottom: 1px solid #aaa;
}

.viewer-body {
    flex: 1;
    min-height: 0;
    display: flex;
}

.patent {
    flex: 1;
    min-width: 0;
    padding: 15px 19px 0 18px;
    overflow: hidden;
    background: #e0f5b0;
    color: #333;
    font: 15px/16px "Liberation Sans", sans-serif;
}

.patent h2 {
    margin: 0 0 6px;
    padding-bottom: 3px;
    border-bottom: 1px solid #556040;
    color: #111;
    font-size: 16px;
    line-height: 24px;
}

.patent h3 {
    margin: 19px 0 3px;
    color: #111;
    font-size: 15px;
    line-height: 20px;
}

.patent table {
    width: 100%;
    table-layout: fixed;
    border-spacing: 0;
    white-space: nowrap;
}

.patent th {
    padding: 0;
    color: #111;
    line-height: 20px;
    text-align: left;
}

/* the last column takes what is left */
.patent th:not(:last-child) {
    width: 111px;
}

.patent th:first-child:not(:last-child) {
    width: 222px;
}

.patent .thirds th:not(:last-child) {
    width: 167px;
}

.patent td {
    padding: 0;
}

.patent tbody tr:first-child td {
    padding-top: 2px;
}

.patent .spaced {
    margin-top: 20px;
}

.patent mark {
    background: #9be3f9;
    color: inherit;
}

.patent p {
    margin: 0;
}

.v-scroll {
    display: flex;
    flex-direction: column;
    align-items: center;
    width: 15px;
    padding-top: 7px;
    background: #f0f0f0;
}

.v-scroll .thumb {
    width: 12px;
    height: 16px;
    margin-top: 4px;
    background: #c1c1c1;
}
```
